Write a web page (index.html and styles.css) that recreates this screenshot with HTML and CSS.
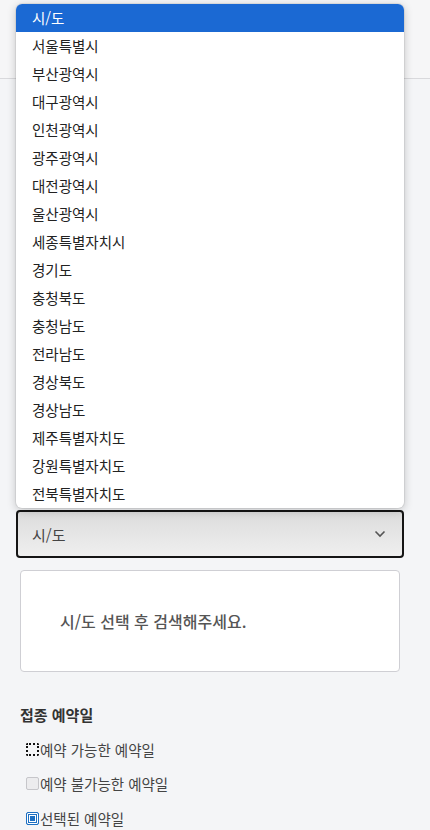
FILE: index.html
```html
<!DOCTYPE html>
<html lang="ko">
<head>
<meta charset="utf-8">
<link rel="stylesheet" href="styles.css">
</head>
<body>
<div class="page">
  <header class="header"></header>
  <main class="main">
    <div class="select">
      <span class="select-text">시/도</span>
      <svg class="chev" width="12" height="8" viewBox="0 0 12 8"><path d="M1.5 1.5 L6 6 L10.5 1.5" fill="none" stroke="#555" stroke-width="1.6"/></svg>
    </div>
    <div class="result"><p class="result-text">시/도 선택 후 검색해주세요.</p></div>
    <h3 class="title">접종 예약일</h3>
    <ul class="legend">
      <li class="legend-item"><span class="box box-dotted"></span>예약 가능한 예약일</li>
      <li class="legend-item"><span class="box box-off"></span>예약 불가능한 예약일</li>
      <li class="legend-item"><span class="box box-on"><span class="box-dot"></span></span>선택된 예약일</li>
    </ul>
  </main>
  <ul class="popup">
    <li class="opt opt-active">시/도</li>
    <li class="opt">서울특별시</li>
    <li class="opt">부산광역시</li>
    <li class="opt">대구광역시</li>
    <li class="opt">인천광역시</li>
    <li class="opt">광주광역시</li>
    <li class="opt">대전광역시</li>
    <li class="opt">울산광역시</li>
    <li class="opt">세종특별자치시</li>
    <li class="opt">경기도</li>
    <li class="opt">충청북도</li>
    <li class="opt">충청남도</li>
    <li class="opt">전라남도</li>
    <li class="opt">경상북도</li>
    <li class="opt">경상남도</li>
    <li class="opt">제주특별자치도</li>
    <li class="opt">강원특별자치도</li>
    <li class="opt">전북특별자치도</li>
  </ul>
</div>
</body>
</html>
```

FILE: styles.css
```css
* { box-sizing: border-box; }
html, body { margin: 0; padding: 0; }
body {
  background: #f4f5f7;
  font-family: "Noto Sans CJK KR", "Noto Sans", sans-serif;
  color: #333;
  width: 430px;
  height: 830px;
  overflow: hidden;
}
.page { position: relative; height: 830px; }
.header {
  height: 79px;
  background: #f6f6f7;
  border-bottom: 1px solid #d9d9dc;
}
.main { padding: 431px 26px 0 16px; }
.select {
  height: 48px;
  border: 2px solid #151515;
  border-radius: 4px;
  background: linear-gradient(#dcdcdc, #efefef);
  display: flex;
  align-items: center;
  justify-content: space-between;
  padding: 0 16px 0 14px;
}
.select-text { font-size: 15px; color: #444; }
.chev { display: block; }
.result {
  margin: 12px 4px 0 4px;
  height: 102px;
  background: #fff;
  border: 1px solid #cfcfd4;
  border-radius: 4px;
  display: flex;
  align-items: center;
  padding: 0 0 0 39px;
}
.result-text { margin: 0; font-size: 16px; font-weight: 500; color: #555; }
.title {
  margin: 30px 0 0 4px;
  font-size: 15px;
  font-weight: 700;
  color: #333;
  line-height: 26px;
}
.legend { list-style: none; margin: 4px 0 0 10px; padding: 0; }
.legend-item {
  display: flex;
  align-items: center;
  height: 34.5px;
  font-size: 14.5px;
  color: #444;
}
.box {
  width: 13px;
  height: 13px;
  border-radius: 2px;
  margin-right: 1px;
  display: inline-flex;
  align-items: center;
  justify-content: center;
}
.box-dotted { border: 2px dotted #111; }
.box-off { border: 1px solid #c6c6ca; background: #ececee; }
.box-on { background: #1d6fc2; border: 1px solid #1d6fc2; box-shadow: inset 0 0 0 1px #fff; }
.box-dot { width: 5px; height: 5px; background: #1d6fc2; outline: 1px solid #fff; }
.popup {
  position: absolute;
  top: 4px;
  left: 16px;
  width: 388px;
  margin: 0;
  padding: 0;
  list-style: none;
  background: #fff;
  border-radius: 6px;
  overflow: hidden;
  box-shadow: 0 2px 10px rgba(0,0,0,0.22), 0 0 0 1px rgba(0,0,0,0.06);
}
.opt {
  height: 28px;
  line-height: 28px;
  padding-left: 16px;
  font-size: 14.5px;
  color: #222;
}
.opt-active { background: #1b69d3; color: #fff; }
```
